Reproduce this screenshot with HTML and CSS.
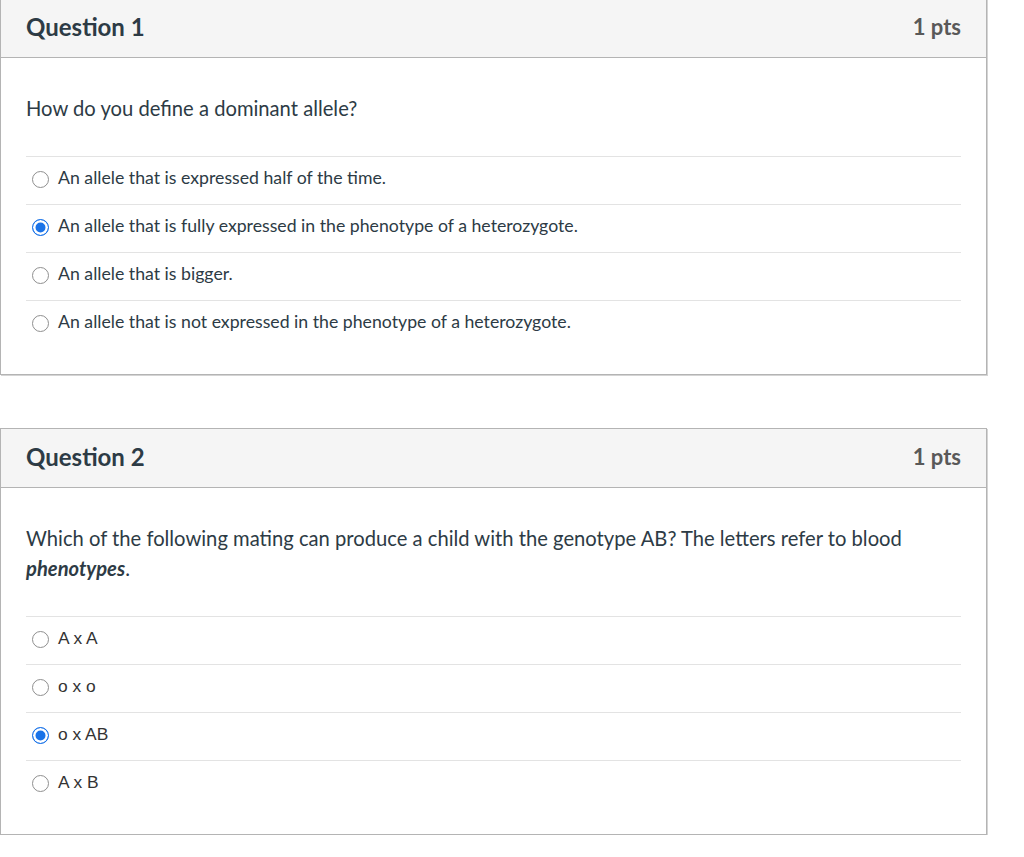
FILE: index.html
```html
<!DOCTYPE html>
<html lang="en">
<head>
<meta charset="utf-8">
<title>Quiz</title>
<link rel="stylesheet" href="styles.css">
</head>
<body>
<div class="quiz">
  <section class="card first">
    <header class="card-head">
      <h2 class="q-title">Question 1</h2>
      <span class="q-pts">1 pts</span>
    </header>
    <div class="card-body">
      <p class="q-text">How do you define a dominant allele?</p>
      <div class="answers">
        <label class="answer"><span class="radio"></span><span class="a-text">An allele that is expressed half of the time.</span></label>
        <label class="answer"><span class="radio checked"></span><span class="a-text">An allele that is fully expressed in the phenotype of a heterozygote.</span></label>
        <label class="answer"><span class="radio"></span><span class="a-text">An allele that is bigger.</span></label>
        <label class="answer"><span class="radio"></span><span class="a-text">An allele that is not expressed in the phenotype of a heterozygote.</span></label>
      </div>
    </div>
  </section>

  <section class="card">
    <header class="card-head">
      <h2 class="q-title">Question 2</h2>
      <span class="q-pts">1 pts</span>
    </header>
    <div class="card-body">
      <p class="q-text">Which of the following mating can produce a child with the genotype AB? The letters refer to blood <strong><em>phenotypes</em></strong>.</p>
      <div class="answers">
        <label class="answer"><span class="radio"></span><span class="a-text alt">A x A</span></label>
        <label class="answer"><span class="radio"></span><span class="a-text alt">o x o</span></label>
        <label class="answer"><span class="radio checked"></span><span class="a-text alt">o x AB</span></label>
        <label class="answer"><span class="radio"></span><span class="a-text alt">A x B</span></label>
      </div>
    </div>
  </section>
</div>
</body>
</html>
```

FILE: styles.css
```css
html, body {
  margin: 0;
  padding: 0;
  background: #ffffff;
}

body {
  font-family: Lato, "Open Sans", sans-serif;
  color: #2d3b45;
}

.quiz {
  width: 987px;
  display: flex;
  flex-direction: column;
  gap: 53px;
}

.card {
  border: 1px solid #b4b4b4;
  box-shadow: 1px 1px 0 #d4d4d4;
  background: #fff;
}

.card.first {
  margin-top: -2px;
}

.card-head {
  display: flex;
  justify-content: space-between;
  align-items: center;
  box-sizing: border-box;
  height: 59px;
  padding: 0 25px 3px 25px;
  background: #f5f5f5;
  border-bottom: 1px solid #b4b4b4;
}

.q-title {
  margin: 0;
  font-size: 24px;
  font-weight: 700;
  color: #2d3b45;
}

.q-pts {
  font-size: 22px;
  font-weight: 700;
  color: #595959;
}

.card-body {
  padding: 35px 25px 26px 25px;
}

.q-text {
  margin: 0 0 33px 0;
  font-size: 20.2px;
  line-height: 30px;
  color: #2d3b45;
}

.q-text strong {
  font-weight: 700;
}

.answers {
  display: flex;
  flex-direction: column;
}

.answer {
  display: flex;
  align-items: flex-start;
  gap: 9px;
  box-sizing: border-box;
  height: 48px;
  padding: 11px 0 0 6px;
  border-top: 1px solid #e3e3e3;
}

.radio {
  box-sizing: border-box;
  width: 17px;
  height: 17px;
  border: 1px solid #8f8f8f;
  border-radius: 50%;
  background: #fff;
  flex: none;
  margin-top: 3px;
}

.radio.checked {
  border: 1.5px solid #1a73e8;
  background: #1a73e8;
  box-shadow: inset 0 0 0 2.5px #fff;
}

.a-text {
  font-size: 17.7px;
  line-height: 20px;
  color: #2d3b45;
}

.a-text.alt {
  font-family: "Liberation Sans", Arial, sans-serif;
  font-size: 17.4px;
  color: #333;
}
```
